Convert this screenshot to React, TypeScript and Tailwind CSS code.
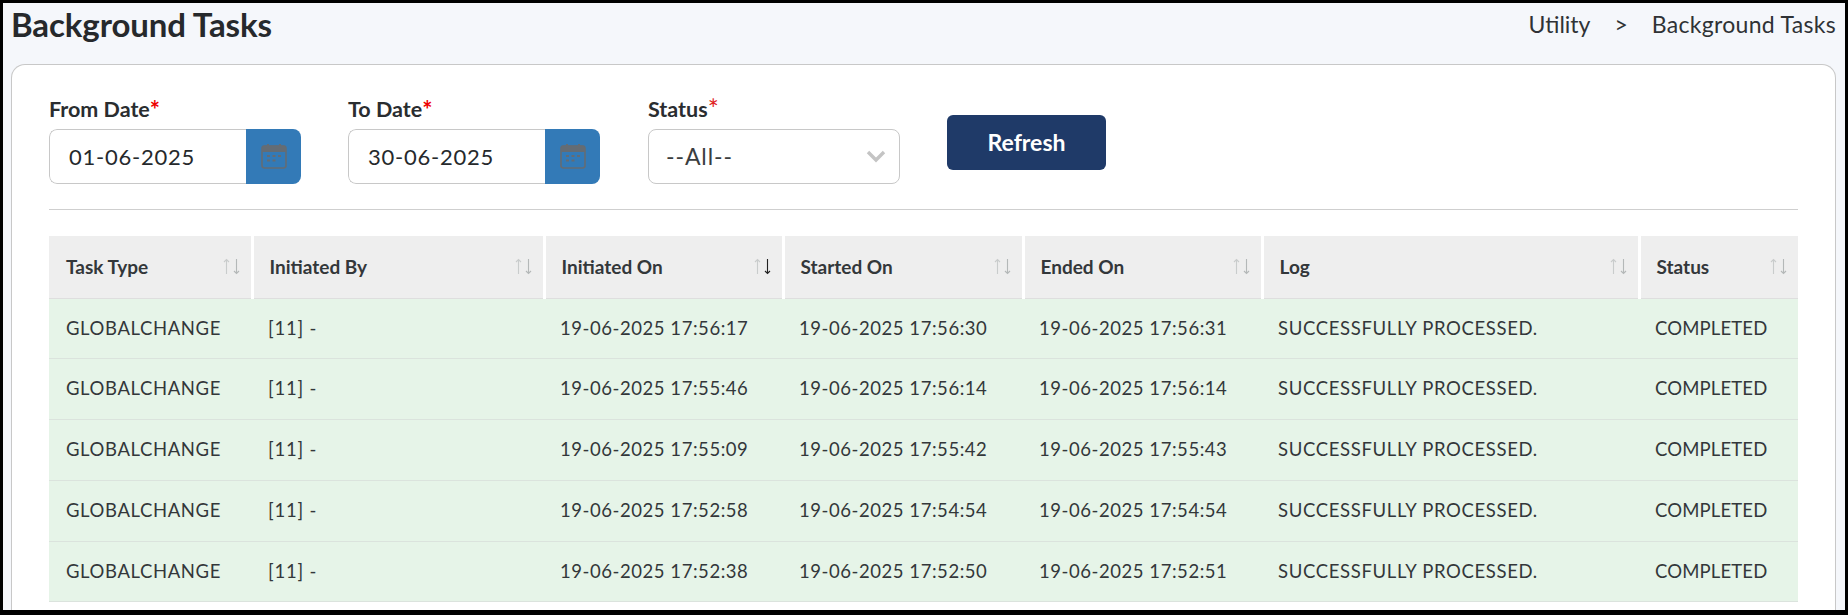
const F = "font-['Lato','Liberation_Sans',sans-serif]";

function Cal() {
  return (
    <svg width="26" height="25" viewBox="0 0 26 25" fill="none" className="block">
      <rect x="1" y="2" width="24" height="22" rx="2.5" stroke="#646c74" strokeWidth="1.6" />
      <path d="M1 3.5a2 2 0 0 1 2-2h20a2 2 0 0 1 2 2V8H1z" fill="#646c74" />
      <rect x="6" y="0" width="2" height="3" fill="#646c74" />
      <rect x="18" y="0" width="2" height="3" fill="#646c74" />
      <path d="M6 12h3M11.5 12h3M17 12h3M6 16.5h3M11.5 16.5h3" stroke="#646c74" strokeWidth="1.8" />
    </svg>
  );
}

function Sort({ active }: { active?: boolean }) {
  return (
    <svg width="19" height="17" viewBox="0 0 19 17" fill="none" className="block shrink-0">
      <path d="M4.5 16V1.5M2 4l2.5-2.5L7 4" stroke="#c9cccc" strokeWidth="1.1" />
      <path d="M14.5 1v14.5M12 13l2.5 2.5L17 13" stroke={active ? "#222222" : "#b4b8b8"} strokeWidth="1.1" />
    </svg>
  );
}

function Label({ text, thin }: { text: string; thin?: boolean }) {
  return (
    <div className="h-[24px] mb-[8px] text-[21.5px] leading-[24px] font-bold text-[#2a2d30] whitespace-nowrap">
      {text}
      <span className={thin ? "font-normal text-[26px] leading-[20px] align-[-2px] text-[#e02020]" : "text-[24px] leading-[20px] align-[-2px] text-[#ee0000]"}>*</span>
    </div>
  );
}

function DateField({ label, value }: { label: string; value: string }) {
  return (
    <div className="w-[252px]">
      <Label text={label} />
      <div className="flex h-[55px] rounded-[8px] overflow-hidden">
        <div className="flex-1 flex items-center pl-[19px] border border-r-0 border-[#c8c8c8] rounded-l-[8px] text-[22px] text-[#26292c] tracking-[0.75px]">
          {value}
        </div>
        <div className="w-[55px] bg-[#337ab7] flex items-center justify-center">
          <Cal />
        </div>
      </div>
    </div>
  );
}

const columns = [
  { name: "Task Type", w: "w-[203px]" },
  { name: "Initiated By", w: "w-[292px]" },
  { name: "Initiated On", w: "w-[239px]", active: true },
  { name: "Started On", w: "w-[240px]" },
  { name: "Ended On", w: "w-[239px]" },
  { name: "Log", w: "w-[377px]" },
  { name: "Status", w: "w-[159px]" },
];

const rows = [
  ["19-06-2025 17:56:17", "19-06-2025 17:56:30", "19-06-2025 17:56:31"],
  ["19-06-2025 17:55:46", "19-06-2025 17:56:14", "19-06-2025 17:56:14"],
  ["19-06-2025 17:55:09", "19-06-2025 17:55:42", "19-06-2025 17:55:43"],
  ["19-06-2025 17:52:58", "19-06-2025 17:54:54", "19-06-2025 17:54:54"],
  ["19-06-2025 17:52:38", "19-06-2025 17:52:50", "19-06-2025 17:52:51"],
];

export default function App() {
  return (
    <div className={`${F} h-[615px] overflow-hidden bg-[#f5f7fb] border-t-[3px] border-l-[3px] border-r-[3px] border-b-[5px] border-black flex flex-col`}>
      <div className="h-[61px] shrink-0 flex justify-between items-start pl-[8px] pr-[9px]">
        <h1 className="text-[33px] leading-[42px] font-bold text-[#26292c] tracking-[-0.1px]">Background Tasks</h1>
        <div className="flex text-[23px] leading-[42px] text-[#2f3235]">
          <span>Utility</span>
          <span className="mx-[24px]">&gt;</span>
          <span className="tracking-[0.3px]">Background Tasks</span>
        </div>
      </div>
      <div className="flex-1 ml-[8px] mr-[9px] bg-white border border-[#c8c8c8] border-b-0 rounded-t-[14px] px-[37px] pt-[32px]">
        <div className="flex items-start">
          <DateField label="From Date" value="01-06-2025" />
          <div className="ml-[47px]">
            <DateField label="To Date" value="30-06-2025" />
          </div>
          <div className="ml-[48px] w-[252px]">
            <Label text="Status" thin />
            <div className="h-[55px] border border-[#c8c8c8] rounded-[8px] flex items-center justify-between pl-[17px] pr-[13px] text-[23px] tracking-[0.9px] text-[#3a3d40]">
              <span>--All--</span>
              <svg width="20" height="13" viewBox="0 0 20 13" fill="none">
                <path d="M2 2l8 8 8-8" stroke="#c4c4c4" strokeWidth="3.4" />
              </svg>
            </div>
          </div>
          <button className="ml-[47px] mt-[18px] w-[159px] h-[55px] rounded-[6px] bg-[#1f3a68] text-white text-[23px] font-bold">
            Refresh
          </button>
        </div>
        <div className="h-px bg-[#cfcfcf] mt-[25px]" />
        <table className="mt-[26px] table-fixed border-collapse text-[18.5px] text-[#33373a] w-[1749px]">
          <thead>
            <tr className="h-[62px] bg-[#eeeeee] border-b border-[#dedede]">
              {columns.map((c, i) => (
                <th
                  key={c.name}
                  className={`${c.w} ${i < columns.length - 1 ? "border-r-[3px] border-white" : ""} p-0 font-bold text-left text-[19px] text-[#33373a]`}
                >
                  <div className={`flex items-center justify-between ${i === 0 ? "pl-[17px]" : "pl-[16px]"} pr-[10px]`}>
                    <span>{c.name}</span>
                    <Sort active={c.active} />
                  </div>
                </th>
              ))}
            </tr>
          </thead>
          <tbody>
            {rows.map((r) => (
              <tr key={r[0]} className="h-[60.8px] bg-[#e6f4e8] border-b border-[#dbe3dd]">
                <td className="pl-[17px] p-0 tracking-[0.6px]">GLOBALCHANGE</td>
                <td className="pl-[16px] p-0 tracking-[0.8px]">[11] -</td>
                {r.map((d, i) => (
                  <td key={i} className="pl-[16px] p-0 tracking-[0.55px]">{d}</td>
                ))}
                <td className="pl-[16px] p-0 tracking-[0.65px]">SUCCESSFULLY PROCESSED.</td>
                <td className="pl-[16px] p-0 tracking-[0.15px]">COMPLETED</td>
              </tr>
            ))}
          </tbody>
        </table>
      </div>
    </div>
  );
}
